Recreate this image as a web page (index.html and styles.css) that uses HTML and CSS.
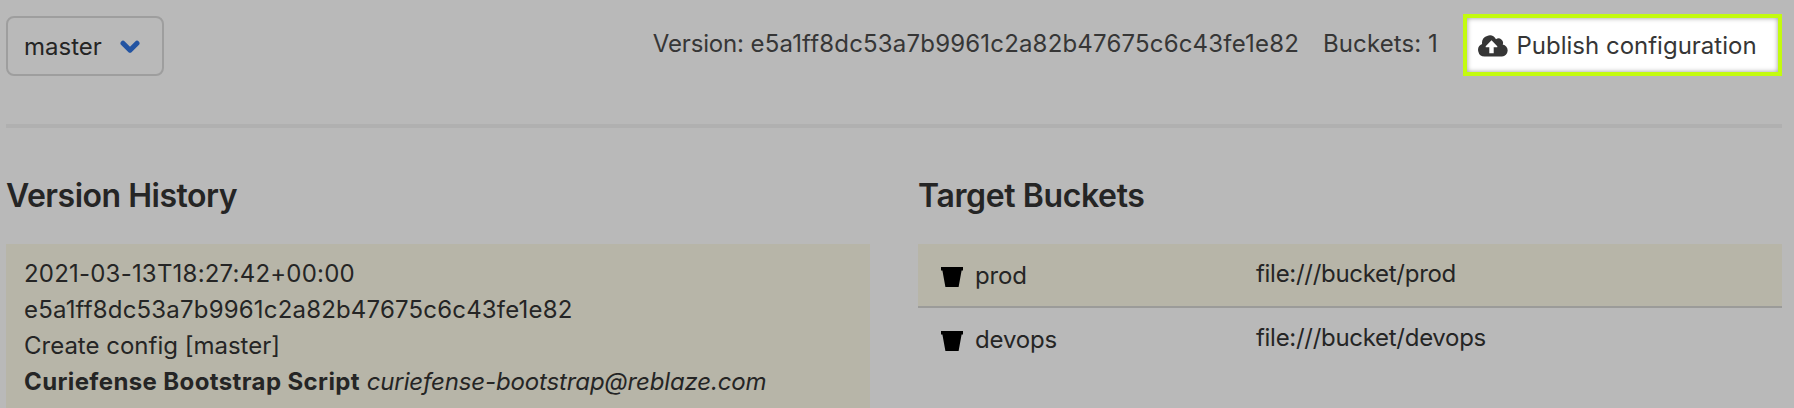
FILE: index.html
```
<!DOCTYPE html>
<html lang="en">
<head>
<meta charset="utf-8">
<title>Publish</title>
<link rel="stylesheet" href="styles.css">
</head>
<body>
<main class="page">
  <header class="toolbar">
    <button class="branch"><span class="branch-name">master</span><svg class="chevron" width="20" height="14" viewBox="0 0 20 14"><path d="M3 3.2 10 10.2 17 3.2"/></svg></button>
    <div class="status">
      <span class="version">Version: <span class="hash">e5a1ff8dc53a7b9961c2a82b47675c6c43fe1e82</span></span>
      <span class="count">Buckets: 1</span>
      <button class="publish"><svg class="cloud" width="30" height="22" viewBox="0 0 30 22"><path class="cloud-body" d="M6.6 21.5A6.5 6.5 0 0 1 4.1 9 7.5 7.5 0 0 1 18 4.2 4.5 4.5 0 0 1 24.7 9.6 6 6 0 0 1 24 21.5Z"/><path class="cloud-arrow" d="M13.5 5.2 19.3 11.2V12.3H15.7V18.3H11.3V12.3H7.7V11.2Z"/></svg><span class="publish-label">Publish configuration</span></button>
    </div>
  </header>
  <hr class="rule">
  <div class="columns">
    <section class="column">
      <h2 class="title title-history">Version History</h2>
      <div class="commit">
        <p class="date">2021-03-13T18:27:42+00:00</p>
        <p class="hash">e5a1ff8dc53a7b9961c2a82b47675c6c43fe1e82</p>
        <p class="message">Create config [master]</p>
        <p><strong class="author">Curiefense Bootstrap Script</strong> <em class="email">curiefense-bootstrap@reblaze.com</em></p>
      </div>
    </section>
    <section class="column">
      <h2 class="title title-buckets">Target Buckets</h2>
      <div class="bucket bucket-selected">
        <svg class="pail" width="22" height="20" viewBox="0 0 22 20"><path d="M0 0H22V3.5H20.6L17.6 20H4.4L1.4 3.5H0Z"/></svg>
        <span class="bucket-name">prod</span><span class="bucket-url">file:///bucket/prod</span>
      </div>
      <div class="bucket">
        <svg class="pail" width="22" height="20" viewBox="0 0 22 20"><path d="M0 0H22V3.5H20.6L17.6 20H4.4L1.4 3.5H0Z"/></svg>
        <span class="bucket-name">devops</span><span class="bucket-url">file:///bucket/devops</span>
      </div>
    </section>
  </div>
</main>
</body>
</html>
```
FILE: styles.css
```
* { box-sizing: border-box; }
body {
  margin: 0;
  height: 408px;
  overflow: hidden;
  background: #b9b9b9;
  color: #252525;
  font: 24px/36px Inter, "Liberation Sans", sans-serif;
  font-feature-settings: "calt" 0;
  white-space: nowrap;
}
.page { padding: 14px 12px 0 6px; }
.toolbar { display: flex; justify-content: space-between; height: 62px; }
button { font: inherit; color: inherit; font-feature-settings: inherit; }
.branch {
  display: flex;
  align-items: center;
  width: 158px;
  height: 60px;
  margin-top: 2px;
  padding: 0 0 0 16px;
  border: 2px solid #9e9e9e;
  border-radius: 8px;
  background: transparent;
}
.branch-name { width: 96px; padding-top: 1px; text-align: left; }
.chevron { margin-top: 2px; fill: none; stroke: #2354a2; stroke-width: 5; stroke-linecap: round; stroke-linejoin: round; }
.status { display: flex; color: #363636; }
.version { margin-top: 12px; margin-right: 24px; letter-spacing: -.15px; }
.hash { letter-spacing: .18px; }
.date { letter-spacing: .21px; }
.count { width: 140px; margin-top: 12px; letter-spacing: .1px; }
.publish {
  display: flex;
  align-items: center;
  width: 319px;
  height: 62px;
  padding: 0 0 0 11px;
  border: 4px solid #c3fb0f;
  background: #fff;
  box-shadow: inset 0 0 5px #999;
}
.cloud { margin-top: 2px; }
.cloud-body { fill: #363636; }
.cloud-arrow { fill: #fff; }
.publish-label { margin-left: 8.5px; padding-top: 2px; }
.rule { height: 4px; margin: 48px 0 50px; border: 0; background: #b0b0b0; }
.column { width: 864px; }
.columns { display: flex; gap: 48px; }
.title { margin: 0 0 30px; font-size: 32px; line-height: 36px; font-weight: 600; }
.title-history { letter-spacing: -.5px; }
.title-buckets { letter-spacing: -.38px; }
.commit { height: 164px; padding: 12px 18px 0; background: #b7b5a8; }
.commit p { margin: 0; }
.author { letter-spacing: .38px; }
.email { letter-spacing: -.14px; }
.bucket { display: flex; height: 64px; padding: 12px 18px 0 23px; }
.bucket-selected { background: #b7b5a8; border-bottom: 2px solid #9b9b99; }
.pail { margin-top: 11px; fill: #000; }
.bucket-name { width: 281px; margin: 2px 0 0 12px; letter-spacing: -.15px; }
.bucket-url { letter-spacing: -.29px; }
```
